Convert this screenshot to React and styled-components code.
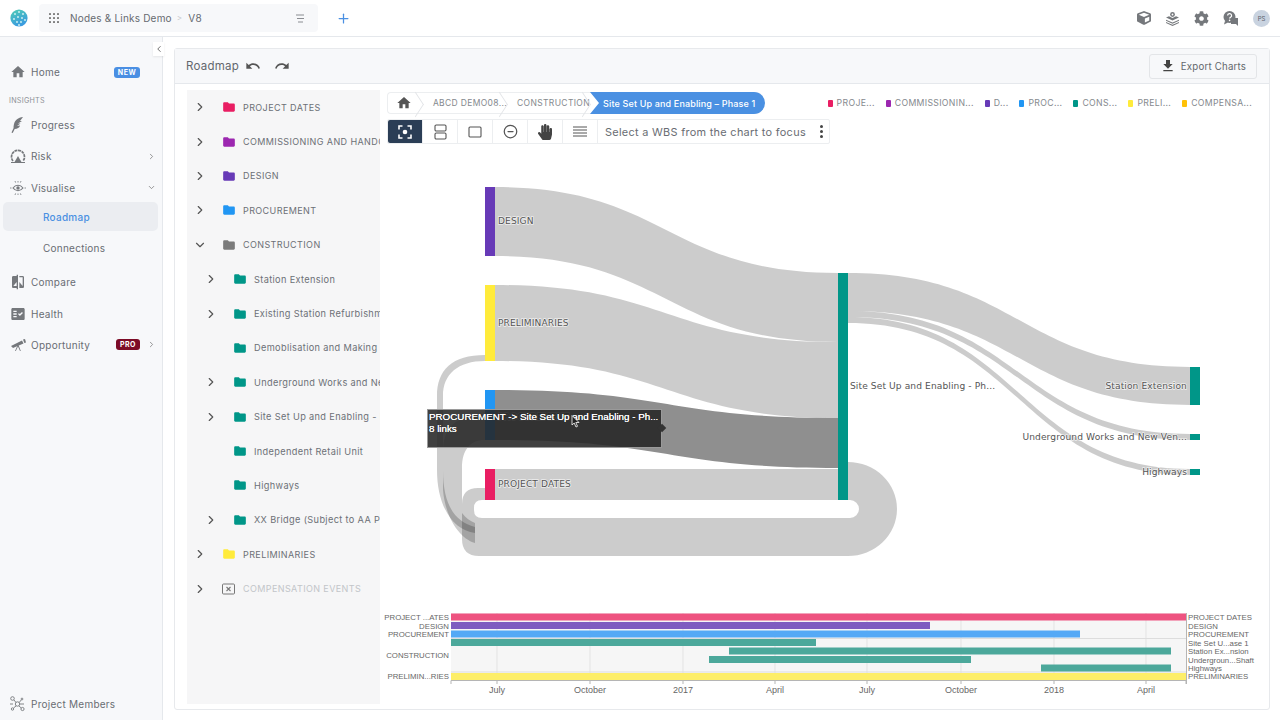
import styled, { createGlobalStyle } from "styled-components";
import { FiChevronRight, FiChevronDown, FiChevronLeft, FiPlus, FiMinusCircle } from "react-icons/fi";
import { FaCube, FaCog, FaHandPaper } from "react-icons/fa";
import { MdHome, MdFolder, MdUndo, MdRedo, MdFileDownload, MdCompare, MdFactCheck } from "react-icons/md";

const GlobalStyle = createGlobalStyle`
  html, body { margin: 0; padding: 0; background: #fff; }
  body { font-family: Inter, "Liberation Sans", sans-serif; color: #63676d; }
  * { box-sizing: border-box; }
`;

// ---- drawn icons
const Logo = () => (
  <svg width="18" height="18" viewBox="0 0 18 18">
    <defs>
      <linearGradient id="lg" x1="0" y1="0" x2="0.4" y2="1">
        <stop offset="0" stopColor="#4fcdb4" />
        <stop offset="1" stopColor="#3a9be0" />
      </linearGradient>
    </defs>
    <circle cx="9" cy="9" r="8.6" fill="url(#lg)" />
    {[[5, 5], [9, 3], [13, 5], [4, 10], [8, 8], [12, 9], [15, 11], [7, 13], [11, 13], [9, 16]].map(([x, y]) => (
      <circle key={x + "-" + y} cx={x} cy={y} r="0.9" fill="#d8f5f2" />
    ))}
  </svg>
);

const GridDots = () => (
  <svg width="10" height="10" viewBox="0 0 10 10" fill="#777">
    {[1, 5, 9].map((y) => [1, 5, 9].map((x) => <rect key={x + "" + y} x={x - 1} y={y - 1} width="2" height="2" rx="0.4" />))}
  </svg>
);

const ShortLines = () => (
  <svg width="10" height="9" viewBox="0 0 10 9" stroke="#8a8d92" strokeWidth="1">
    <path d="M1 1h8M2 4.5h7M3 8h5" />
  </svg>
);

const Stack = () => (
  <svg width="15" height="15" viewBox="0 0 15 15" fill="#75787c">
    <circle cx="7.5" cy="3.5" r="2.4" />
    <circle cx="7.5" cy="3.5" r="0.9" fill="#fff" />
    <path d="M1 6.5 4 5.2 7.5 7 11 5.2 14 6.5 7.5 9.6z" />
    <path d="M1 8.7 7.5 11.6 14 8.7 14 9.8 7.5 12.7 1 9.8z" />
    <path d="M1 11 7.5 13.8 14 11 14 12 7.5 15 1 12z" />
  </svg>
);

const HelpChat = () => (
  <svg width="16" height="15" viewBox="0 0 16 15">
    <path d="M10 7h5v8l-2-2H8v-3z" fill="#75787c" />
    <circle cx="6.5" cy="6" r="6" fill="#75787c" />
    <path d="M2 10 1 13.5 5 11.5z" fill="#75787c" />
    <path d="M4.6 4.6a2 2 0 1 1 3 1.7c-.7.4-1 .7-1 1.3" fill="none" stroke="#fff" strokeWidth="1.2" />
    <circle cx="6.6" cy="9.4" r="0.8" fill="#fff" />
  </svg>
);

const Quill = () => (
  <svg width="15" height="16" viewBox="0 0 15 16" fill="#75787c">
    <path d="M13 0C8 .5 5 3 4 7c-.4 1.8-.5 3-.4 4L1.500 15.500l1.200.5 2-4c2.500 0 5-1.500 5.300-3.500L7 9l3.500-2.500L8 6.500 12 4l-2 0z" />
  </svg>
);

const RiskIcon = () => (
  <svg width="16" height="16" viewBox="0 0 16 16" fill="none" stroke="#75787c">
    <path d="M3 13A6.500 6.500 0 1 1 13 13" strokeWidth="1.700" strokeDasharray="3 .6" />
    <path d="M4 15 8 8l4 7z" fill="#75787c" stroke="none" />
    <path d="M1 14.500h14" strokeWidth="1" />
  </svg>
);

const EyeRays = () => (
  <svg width="16" height="14" viewBox="0 0 16 14" fill="none" stroke="#75787c">
    <path d="M3 7c2.800-3.600 7.200-3.600 10 0-2.800 3.600-7.200 3.600-10 0z" strokeWidth="1.100" />
    <circle cx="8" cy="7" r="1.700" fill="#75787c" stroke="none" />
    <path d="M0 7h1.500M14.500 7H16M5 0l.6 1.600M8 0v1.500M11 0l-.6 1.600M5 14l.6-1.600M8 14v-1.500M11 14l-.6-1.600" strokeWidth="0.8" />
  </svg>
);

const Telescope = () => (
  <svg width="16" height="12" viewBox="0 0 16 12" fill="#75787c">
    <path d="M1 7 12 1.500l1.500 3L3 9z" />
    <path d="M13 .5 15 0l1 3.500-1.700.6z" />
    <path d="M7.500 6.500 5 12h.8L8 7.500l2 4.500h.8L8.500 6z" />
  </svg>
);

const MembersIcon = () => (
  <svg width="15" height="16" viewBox="0 0 15 16" fill="none" stroke="#75787c" strokeWidth="0.9">
    <circle cx="2.500" cy="2.500" r="1.800" />
    <circle cx="7.500" cy="8" r="2.200" />
    <circle cx="12.500" cy="13" r="1.600" />
    <circle cx="2.500" cy="13" r="1.200" />
    <circle cx="12" cy="3" r="0.900" />
    <path d="M4 4l2 2.500M9 10l2.300 2M6 10l-2.500 2M9.200 6.500 11.400 3.800M10 8h4M0 8h3" />
  </svg>
);

const FocusIcon = () => (
  <svg width="14" height="14" viewBox="0 0 14 14" fill="none" stroke="#fff" strokeWidth="1.600">
    <path d="M1 4.500V1h3.500M9.500 1H13v3.500M13 9.500V13H9.500M4.500 13H1V9.500" />
    <circle cx="7" cy="7" r="2.300" fill="#fff" stroke="none" />
  </svg>
);

const SplitIcon = () => (
  <svg width="13" height="16" viewBox="0 0 13 16" fill="none" stroke="#555" strokeWidth="1.100">
    <rect x="1" y="1" width="11" height="6" rx="1.200" />
    <rect x="1" y="9" width="11" height="6" rx="1.200" />
  </svg>
);

const SquareIcon = () => (
  <svg width="14" height="14" viewBox="0 0 14 14" fill="none" stroke="#555" strokeWidth="1.100">
    <rect x="1" y="2" width="12" height="10" rx="1" />
  </svg>
);

const LinesIcon = () => (
  <svg width="14" height="11" viewBox="0 0 14 11" stroke="#555" strokeWidth="1">
    <path d="M0 1h14M0 4h14M0 7h14M0 10h14" />
  </svg>
);

const BoxX = () => (
  <svg width="13" height="12" viewBox="0 0 13 12" fill="none" stroke="#777" strokeWidth="1">
    <rect x="0.500" y="1" width="12" height="10" rx="1" />
    <path d="M4.500 4l4 4M8.500 4l-4 4" strokeWidth="1.100" />
  </svg>
);

// ---- data
const NAV_TOP = [
  { label: "Progress", icon: <Quill /> },
  { label: "Risk", icon: <RiskIcon />, chevron: "right" },
  { label: "Visualise", icon: <EyeRays />, chevron: "down" },
];

const NAV_BOTTOM = [
  { label: "Compare", icon: <MdCompare size={16} color="#75787c" /> },
  { label: "Health", icon: <MdFactCheck size={16} color="#75787c" /> },
  { label: "Opportunity", icon: <Telescope />, badge: "PRO", chevron: "right" },
];

const TREE = [
  { label: "PROJECT DATES", color: "#e91e63", open: "right" },
  { label: "COMMISSIONING AND HANDOVER", color: "#9c27b0", open: "right" },
  { label: "DESIGN", color: "#673ab7", open: "right" },
  { label: "PROCUREMENT", color: "#2196f3", open: "right" },
  { label: "CONSTRUCTION", color: "#7b7b7b", open: "down" },
  { label: "Station Extension", color: "#009688", open: "right", child: true },
  { label: "Existing Station Refurbishment", color: "#009688", open: "right", child: true },
  { label: "Demoblisation and Making Good", color: "#009688", child: true },
  { label: "Underground Works and New Vent", color: "#009688", open: "right", child: true },
  { label: "Site Set Up and Enabling - Phase 1", color: "#009688", open: "right", child: true },
  { label: "Independent Retail Unit", color: "#009688", child: true },
  { label: "Highways", color: "#009688", child: true },
  { label: "XX Bridge (Subject to AA Powers)", color: "#009688", open: "right", child: true },
  { label: "PRELIMINARIES", color: "#ffeb3b", open: "right" },
  { label: "COMPENSATION EVENTS", open: "right", off: true },
];

const LEGEND = [
  ["PROJE...", "#e91e63"],
  ["COMMISSIONIN...", "#9c27b0"],
  ["D...", "#673ab7"],
  ["PROC...", "#2196f3"],
  ["CONS...", "#009688"],
  ["PRELI...", "#ffeb3b"],
  ["COMPENSA...", "#ffc107"],
];

const link = (x0, a0, b0, x1, a1, b1) => {
  const m = (x0 + x1) / 2;
  return `M${x0} ${a0}C${m} ${a0} ${m} ${a1} ${x1} ${a1}L${x1} ${b1}C${m} ${b1} ${m} ${b0} ${x0} ${b0}Z`;
};

const LINKS = [
  link(495, 187, 256, 838, 273, 342),
  link(495, 285, 361, 838, 342, 418),
  link(495, 469, 500, 838, 469, 500),
  link(848, 273, 311, 1190, 367, 405),
  link(848, 311, 317, 1190, 434, 440),
  link(848, 317, 323, 1190, 469, 475),
  // loop back, node bottom round to the left side
  "M848 462A49 47 0 0 1 848 556L479 556Q462 556 462 539L462 504Q462 488 478 488L485 488L485 500L482 500Q474 500 474 508L474 510Q474 518 482 518L850 518A9 9 0 0 0 850 500L848 500Z",
  "M485 415C455 415 443 428 443 452L443 490C445 515 458 538 475 543L475 523C470 521 466 518 462 513L462 468C462 450 470 440 485 440Z",
  "M485 355C452 355 437 370 437 396L437 470C437 505 452 530 475 533L475 527C455 522 443 505 443 470L443 396C443 374 458 361 485 361Z",
];

const NODES = [
  [187, 69, "#673ab7", 485],
  [285, 76, "#ffeb3b", 485],
  [390, 50, "#2196f3", 485],
  [469, 31, "#e91e63", 485],
  [273, 227, "#009688", 838],
  [367, 38, "#009688", 1190],
  [434, 6, "#009688", 1190],
  [469, 6, "#009688", 1190],
];

const LABELS = [
  ["DESIGN", 498, 224, "start"],
  ["PRELIMINARIES", 498, 326, "start"],
  ["PROCUREMENT", 498, 420, "start"],
  ["PROJECT DATES", 498, 487, "start"],
  ["Site Set Up and Enabling - Ph...", 850, 389, "start"],
  ["Station Extension", 1187, 389, "end"],
  ["Underground Works and New Ven...", 1187, 440, "end"],
  ["Highways", 1187, 475, "end"],
];

const BARS = [
  [451, 1186, 613.5, 7, "#ee5380"],
  [451, 930, 622, 7, "#7e5cc0"],
  [451, 1080, 630.5, 7, "#54a9f6"],
  [451, 816, 639, 7, "#4ca89b"],
  [729, 1171, 647.5, 7, "#4ca89b"],
  [709, 971, 656, 7, "#4ca89b"],
  [1041, 1171, 664.5, 7, "#4ca89b"],
  [451, 1186, 673, 7, "#fdee68"],
];

const LEFT_LABELS = [
  ["PROJECT ...ATES", 620],
  ["DESIGN", 628.500],
  ["PROCUREMENT", 637],
  ["CONSTRUCTION", 658],
  ["PRELIMIN...RIES", 679],
];

const RIGHT_LABELS = [
  ["PROJECT DATES", 620],
  ["DESIGN", 628.500],
  ["PROCUREMENT", 637],
  ["Site Set U...ase 1", 645.500],
  ["Station Ex...nsion", 654],
  ["Undergroun...Shaft", 662.500],
  ["Highways", 671],
  ["PRELIMINARIES", 679],
];

const TICKS = [
  [497, "July"], [590, "October"], [683, "2017"], [775, "April"],
  [867, "July"], [961, "October"], [1054, "2018"], [1146, "April"],
];

// ---- app
export default function App() {
  return (
    <Page>
      <GlobalStyle />
      <TopBar>
        <LogoSlot><Logo /></LogoSlot>
        <ProjectPill>
          <GridDots />
          <ProjectName>Nodes &amp; Links Demo</ProjectName>
          <ProjectSep>&gt;</ProjectSep>
          <ProjectVersion>V8</ProjectVersion>
          <PillEnd><ShortLines /></PillEnd>
        </ProjectPill>
        <AddButton><FiPlus size={15} /></AddButton>
        <TopIcons>
          <FaCube size={14} color="#75787c" />
          <Stack />
          <FaCog size={15} color="#75787c" />
          <HelpChat />
          <Avatar>PS</Avatar>
        </TopIcons>
      </TopBar>

      <Content>
        <Sidebar>
          <CollapseTab><FiChevronLeft size={10} /></CollapseTab>
          <NavRow>
            <NavIcon><MdHome size={16} color="#75787c" /></NavIcon>
            <span>Home</span>
            <Badge>NEW</Badge>
          </NavRow>
          <SectionLabel>INSIGHTS</SectionLabel>
          {NAV_TOP.map((item) => <NavLink key={item.label} item={item} />)}
          <SubItem $active>Roadmap</SubItem>
          <SubItem>Connections</SubItem>
          <BottomGroup>
            {NAV_BOTTOM.map((item) => <NavLink key={item.label} item={item} />)}
          </BottomGroup>
          <FooterRow>
            <NavIcon><MembersIcon /></NavIcon>
            <span>Project Members</span>
          </FooterRow>
        </Sidebar>

        <Main>
          <Card>
            <CardHeader>
              <CardTitle>Roadmap</CardTitle>
              <HistoryIcons>
                <MdUndo size={16} color="#555" />
                <MdRedo size={16} color="#555" />
              </HistoryIcons>
              <ExportButton>
                <MdFileDownload size={16} color="#444" />
                Export Charts
              </ExportButton>
            </CardHeader>
            <CardBody>
              <Tree>
                {TREE.map((row) => (
                  <TreeRow key={row.label} $child={row.child}>
                    <Caret>
                      {row.open === "right" && <FiChevronRight size={14} />}
                      {row.open === "down" && <FiChevronDown size={14} />}
                    </Caret>
                    <FolderSlot>
                      {row.off ? <BoxX /> : <MdFolder size={14} color={row.color} />}
                    </FolderSlot>
                    <TreeLabel $off={row.off} $child={row.child}>{row.label}</TreeLabel>
                  </TreeRow>
                ))}
              </Tree>

              <ChartColumn>
                <CrumbRow>
                  <Crumbs>
                    <HomeCrumb><MdHome size={16} color="#555" /></HomeCrumb>
                    <Crumb $w={84}>ABCD DEMO08...</Crumb>
                    <Crumb $w={83}>CONSTRUCTION</Crumb>
                    <ActiveCrumb>Site Set Up and Enabling – Phase 1</ActiveCrumb>
                  </Crumbs>
                  <Legend>
                    {LEGEND.map(([name, color]) => (
                      <LegendItem key={name}>
                        <Swatch $color={color} />
                        {name}
                      </LegendItem>
                    ))}
                  </Legend>
                </CrumbRow>

                <Toolbar>
                  <ToolButton $active><FocusIcon /></ToolButton>
                  <ToolButton><SplitIcon /></ToolButton>
                  <ToolButton><SquareIcon /></ToolButton>
                  <ToolButton><FiMinusCircle size={15} color="#555" /></ToolButton>
                  <ToolButton><FaHandPaper size={16} color="#444" /></ToolButton>
                  <ToolButton><LinesIcon /></ToolButton>
                  <FocusHint>
                    Select a WBS from the chart to focus
                    <Kebab><i /><i /><i /></Kebab>
                  </FocusHint>
                </Toolbar>

                <ChartArea>
                  <ChartSvg width="873" height="455" viewBox="387 150 873 455">
                    {LINKS.map((d, i) => <path key={i} d={d} fill="#000" fillOpacity="0.2" />)}
                    <path d={link(495, 390, 440, 838, 418, 468)} fill="#8f8f8f" />
                    {NODES.map(([y, h, color, x]) => <rect key={y + "-" + x} x={x} y={y} width="10" height={h} fill={color} />)}
                    {LABELS.map(([text, x, y, anchor]) => (
                      <SankeyLabel key={text} x={x} y={y} textAnchor={anchor}>{text}</SankeyLabel>
                    ))}
                  </ChartSvg>

                  <ChartSvg width="873" height="99" viewBox="387 605 873 99">
                    <rect x="451" y="613" width="735" height="67" fill="#f6f6f6" />
                    {TICKS.map(([x]) => <line key={x} x1={x} x2={x} y1="613" y2="680" stroke="#e3e3e3" />)}
                    <line x1="451" x2="1186" y1="638.500" y2="638.500" stroke="#ddd" />
                    <line x1="451" x2="1186" y1="672" y2="672" stroke="#ddd" />
                    {BARS.map(([x0, x1, y, h, color]) => (
                      <rect key={x0 + "-" + y} x={x0} y={y} width={x1 - x0} height={h} fill={color} />
                    ))}
                    <path d="M451 684V680.500H1186V684" fill="none" stroke="#b5b5b5" />
                    <line x1="1186.500" x2="1186.500" y1="613" y2="684" stroke="#b5b5b5" />
                    {LEFT_LABELS.map(([text, y]) => <RowLabel key={text} x="449" y={y} textAnchor="end">{text}</RowLabel>)}
                    {RIGHT_LABELS.map(([text, y]) => <RowLabel key={text} x="1188" y={y}>{text}</RowLabel>)}
                    {TICKS.map(([x, text]) => (
                      <g key={x}>
                        <line x1={x} x2={x} y1="680" y2="684" stroke="#b5b5b5" />
                        <TickLabel x={x} y="693" textAnchor="middle">{text}</TickLabel>
                      </g>
                    ))}
                  </ChartSvg>

                  <Tooltip>
                    <div>PROCUREMENT -&gt; Site Set Up and Enabling - Ph...</div>
                    <div>8 links</div>
                  </Tooltip>
                  <Cursor width="9" height="13" viewBox="0 0 9 13">
                    <path d="M1 0.500V10L3.200 8 5 12 6.500 11.300 4.800 7.500 8 7.500Z" fill="#222" stroke="#fff" strokeWidth="0.800" />
                  </Cursor>
                </ChartArea>
              </ChartColumn>
            </CardBody>
          </Card>
        </Main>
      </Content>
    </Page>
  );
}

function NavLink({ item }) {
  return (
    <NavRow>
      <NavIcon>{item.icon}</NavIcon>
      <span>{item.label}</span>
      {item.badge && <Badge $pro>{item.badge}</Badge>}
      {item.chevron === "right" && <NavChevron><FiChevronRight size={9} /></NavChevron>}
      {item.chevron === "down" && <NavChevron><FiChevronDown size={9} /></NavChevron>}
    </NavRow>
  );
}

// ---- styles
const Page = styled.div`
  width: 1280px;
  height: 720px;
  display: flex;
  flex-direction: column;
  overflow: hidden;
`;

const TopBar = styled.header`
  height: 37px;
  flex: none;
  display: flex;
  align-items: center;
  border-bottom: 1px solid #e5e8ec;
  padding-right: 10px;
`;

const LogoSlot = styled.div`
  width: 39px;
  padding-left: 10px;
  display: flex;
`;

const ProjectPill = styled.div`
  width: 279px;
  height: 28px;
  background: #f7f8fa;
  border-radius: 4px;
  display: flex;
  align-items: center;
  padding: 0 13px 0 10px;
  font-size: 10px;
  letter-spacing: 0.2px;
`;

const ProjectName = styled.span`
  color: #666a70;
  margin-left: 11px;
`;

const ProjectVersion = styled.span`
  color: #666a70;
  margin-left: 6px;
`;

const ProjectSep = styled.span`
  color: #c4c7cb;
  margin-left: 5px;
  font-size: 8px;
`;

const PillEnd = styled.div`
  margin-left: auto;
  display: flex;
`;

const AddButton = styled.div`
  margin-left: 18px;
  color: #4a90e2;
  display: flex;
`;

const TopIcons = styled.div`
  margin-left: auto;
  display: flex;
  align-items: center;
  gap: 14px;
`;

const Avatar = styled.div`
  width: 17px;
  height: 17px;
  border-radius: 50%;
  background: #c9d3e0;
  color: #5a6068;
  font-size: 6px;
  display: flex;
  align-items: center;
  justify-content: center;
`;

const Content = styled.div`
  flex: 1;
  display: flex;
  min-height: 0;
`;

const Sidebar = styled.aside`
  position: relative;
  width: 163px;
  flex: none;
  background: #f7f8fa;
  border-right: 1px solid #e5e8ec;
  display: flex;
  flex-direction: column;
  padding: 19.500px 4px 0 3px;
  font-size: 10px;
  letter-spacing: 0.25px;
`;

const CollapseTab = styled.div`
  position: absolute;
  top: 5px;
  right: -2px;
  width: 11px;
  height: 14px;
  background: #fff;
  box-shadow: 0 1px 2px rgba(0, 0, 0, 0.08);
  color: #555;
  display: flex;
  align-items: center;
  justify-content: center;
`;

const NavRow = styled.div`
  height: 31.300px;
  flex: none;
  display: flex;
  align-items: center;
  color: #696d73;
`;

const NavIcon = styled.div`
  width: 28px;
  padding-left: 7px;
  display: flex;
  align-items: center;
  flex: none;
`;

const NavChevron = styled.div`
  position: absolute;
  left: 147px;
  display: flex;
  color: #777;
`;

const Badge = styled.span`
  margin-left: auto;
  margin-right: 18px;
  height: 11px;
  width: ${(p) => (p.$pro ? "24px" : "26px")};
  border-radius: 3px;
  background: ${(p) => (p.$pro ? "#7c0b26" : "#4a8fe3")};
  color: #fff;
  font-size: 7px;
  font-weight: 700;
  line-height: 11px;
  letter-spacing: 0.5px;
  text-align: center;
`;

const SectionLabel = styled.div`
  height: 18px;
  margin-top: 3.500px;
  padding: 1px 0 0 6px;
  font-size: 7.200px;
  line-height: 18px;
  color: #8d9197;
`;

const SubItem = styled.div`
  height: ${(p) => (p.$active ? "29px" : "31.500px")};
  margin-top: ${(p) => (p.$active ? "-1px" : "1px")};
  padding-left: 40px;
  border-radius: 5px;
  display: flex;
  align-items: center;
  background: ${(p) => (p.$active ? "#ebedf1" : "transparent")};
  color: ${(p) => (p.$active ? "#4a90e2" : "#696d73")};
  font-weight: ${(p) => (p.$active ? 500 : 400)};
`;

const BottomGroup = styled.div`
  margin-top: 3px;
  display: flex;
  flex-direction: column;
`;

const FooterRow = styled(NavRow)`
  margin-top: auto;
`;

const Main = styled.main`
  flex: 1;
  min-width: 0;
  padding: 11px 10px 10px 11px;
`;

const Card = styled.section`
  height: 100%;
  border: 1px solid #e7e9ec;
  border-radius: 3px;
  display: flex;
  flex-direction: column;
`;

const CardHeader = styled.div`
  height: 35px;
  flex: none;
  background: #f7f8fa;
  border-bottom: 1px solid #e5e8ec;
  display: flex;
  align-items: center;
  padding: 0 12px 0 11px;
`;

const CardTitle = styled.span`
  font-size: 11.500px;
  letter-spacing: 0.25px;
  color: #63676d;
  margin-right: 6px;
`;

const HistoryIcons = styled.div`
  display: flex;
  align-items: center;
  gap: 13px;
`;

const ExportButton = styled.button`
  margin-left: auto;
  height: 25px;
  width: 108px;
  padding: 0;
  border: 1px solid #e3e5e8;
  border-radius: 3px;
  background: #f7f8fa;
  display: flex;
  align-items: center;
  justify-content: center;
  gap: 5px;
  font-family: inherit;
  font-size: 9.700px;
  letter-spacing: 0.2px;
  color: #63676d;
`;

const CardBody = styled.div`
  flex: 1;
  min-height: 0;
  display: flex;
  padding: 6px 9px 5px 12px;
  gap: 7px;
`;

const Tree = styled.nav`
  width: 193px;
  flex: none;
  background: #f6f6f7;
  overflow: hidden;
`;

const TreeRow = styled.div`
  height: 34.400px;
  display: flex;
  align-items: center;
  white-space: nowrap;
  padding-left: ${(p) => (p.$child ? "17px" : "6px")};
`;

const Caret = styled.div`
  width: 29px;
  flex: none;
  display: flex;
  color: #555;
`;

const FolderSlot = styled.div`
  width: 21px;
  flex: none;
  display: flex;
  align-items: center;
`;

const TreeLabel = styled.span`
  font-size: ${(p) => (p.$child ? "9.200px" : "9px")};
  letter-spacing: ${(p) => (p.$child ? "0.35px" : "0.4px")};
  color: ${(p) => (p.$off ? "#c2c5c9" : "#6c7076")};
`;

const ChartColumn = styled.div`
  flex: 1;
  min-width: 0;
  display: flex;
  flex-direction: column;
  padding-top: 2px;
`;

const CrumbRow = styled.div`
  height: 22px;
  flex: none;
  display: flex;
  align-items: center;
  justify-content: space-between;
`;

const Crumbs = styled.div`
  display: flex;
  height: 22px;
  border: 1px solid #eceef0;
  border-right: 0;
  border-radius: 4px 11px 11px 4px;
  font-size: 8.500px;
  letter-spacing: 0.35px;
  color: #85898e;
`;

const Crumb = styled.div`
  position: relative;
  width: ${(p) => p.$w}px;
  padding-left: 10px;
  display: flex;
  align-items: center;
  justify-content: center;
  white-space: nowrap;
  &::after {
    content: "";
    position: absolute;
    right: 0;
    top: 3.500px;
    width: 14px;
    height: 14px;
    border-top: 1px solid #e2e4e7;
    border-right: 1px solid #e2e4e7;
    transform: rotate(45deg) skew(12deg, 12deg);
  }
`;

const HomeCrumb = styled(Crumb)`
  width: 35px;
  justify-content: flex-start;
  padding-left: 8px;
`;

const ActiveCrumb = styled.div`
  width: 175px;
  margin-top: -1px;
  height: 22px;
  background: #4a90e2;
  color: #fff;
  font-size: 9px;
  letter-spacing: 0.15px;
  font-weight: 500;
  display: flex;
  align-items: center;
  padding-left: 13px;
  border-radius: 0 11px 11px 0;
  clip-path: polygon(0 0, 100% 0, 100% 100%, 0 100%, 9px 50%);
  white-space: nowrap;
`;

const Legend = styled.div`
  display: flex;
  gap: 11px;
  padding-right: 8px;
  font-size: 8.700px;
  letter-spacing: 0.33px;
  color: #85898e;
`;

const LegendItem = styled.div`
  display: flex;
  align-items: center;
  gap: 4px;
  white-space: nowrap;
`;

const Swatch = styled.i`
  width: 5px;
  height: 7px;
  border-radius: 1px;
  background: ${(p) => p.$color};
`;

const Toolbar = styled.div`
  margin-top: 5px;
  width: 443px;
  height: 25px;
  flex: none;
  display: flex;
  border: 1px solid #eceef0;
  border-radius: 2px;
`;

const ToolButton = styled.div`
  width: 35px;
  flex: none;
  display: flex;
  align-items: center;
  justify-content: center;
  background: ${(p) => (p.$active ? "#2b3e56" : "#fff")};
  border-right: 1px solid #eceef0;
  border-radius: ${(p) => (p.$active ? "2px 0 0 2px" : "0")};
`;

const FocusHint = styled.div`
  flex: 1;
  display: flex;
  align-items: center;
  justify-content: space-between;
  padding: 0 6px 0 7px;
  font-size: 10.900px;
  letter-spacing: 0.3px;
  color: #696d73;
  white-space: nowrap;
`;

const Kebab = styled.div`
  display: flex;
  flex-direction: column;
  gap: 2px;
  i {
    width: 3px;
    height: 3px;
    border-radius: 50%;
    background: #444;
  }
`;

const ChartArea = styled.div`
  position: relative;
  margin-top: 6px;
  flex: 1;
  min-height: 0;
`;

const ChartSvg = styled.svg`
  display: block;
  overflow: visible;
`;

const SankeyLabel = styled.text`
  font-family: "DejaVu Sans", sans-serif;
  font-size: 9.100px;
  letter-spacing: 0.1px;
  fill: #555;
  paint-order: stroke;
  stroke: #fff;
  stroke-width: 1.500px;
  stroke-opacity: 0.700;
`;

const RowLabel = styled.text`
  font-family: "Liberation Sans", sans-serif;
  font-size: 7.800px;
  fill: #666;
`;

const TickLabel = styled.text`
  font-family: "Liberation Sans", sans-serif;
  font-size: 9px;
  fill: #666;
`;

const Tooltip = styled.div`
  position: absolute;
  left: 40px;
  top: 259px;
  width: 235px;
  height: 39px;
  padding: 1px 0 0 1px;
  background: rgba(38, 38, 38, 0.88);
  border: 1px solid #9a9a9a;
  font-family: "Liberation Sans", sans-serif;
  font-size: 9.800px;
  line-height: 12px;
  color: #fff;
  white-space: nowrap;
  text-shadow: 0 0 0.5px #fff;
  &::after {
    content: "";
    position: absolute;
    right: -4px;
    top: 15px;
    width: 6px;
    height: 6px;
    background: #333;
    transform: rotate(45deg);
  }
`;

const Cursor = styled.svg`
  position: absolute;
  left: 184px;
  top: 265px;
`;
